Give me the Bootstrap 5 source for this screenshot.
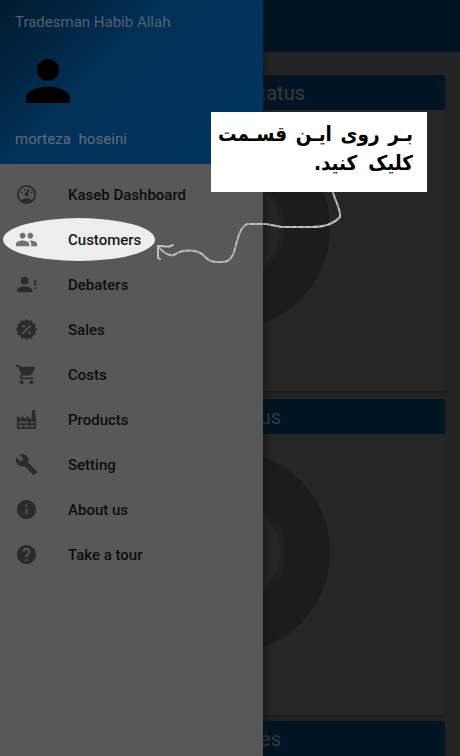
<!DOCTYPE html>
<html lang="en">
<head>
<meta charset="utf-8">
<meta name="viewport" content="width=device-width, initial-scale=1">
<title>Kaseb</title>
<link href="https://cdn.jsdelivr.net/npm/bootstrap@5.3.0/dist/css/bootstrap.min.css" rel="stylesheet">
<style>
body{font-family:Roboto,sans-serif;background:#232323;margin:0}
.app{width:460px;height:756px}
.appbar{height:52px;background:#001423}
.feed{padding:23px 15px 0 14px}
.stat{background:#262626;border:0;border-radius:3px;box-shadow:0 1px 2px #181818;height:316px;margin-bottom:8px;flex:none}
.stat:nth-child(2){margin-bottom:6px}
.stat-head{height:35px;background:#001423;color:#383a3c;font-size:20px;line-height:37px;border-radius:3px 3px 0 0;padding-right:140px}
.stat:nth-child(2) .stat-head,.stat:nth-child(3) .stat-head{padding-right:164px}
.ring{width:202px;height:202px;margin:17px 0 0 114px}
.drawer{width:263px;background:#585858;box-shadow:0 0 8px #111}
.profile{height:164px;background:linear-gradient(135deg,#001a2d 0%,#02325a 43%,#003460 100%);color:#53616d;padding:12px 15px 15px;font-size:15px;line-height:20px}
.profile .who{color:#656b70;white-space:pre;letter-spacing:.05px}
.avatar{width:66px;height:66px}
.entries{padding-top:8px}
.entry{height:45px;padding-left:15px;font-size:15px;font-weight:500;color:#0d0d0d;line-height:20px}
.entry svg{width:23px;height:23px;margin-right:30px;fill:#2b2b2b;flex:none;position:relative}
.entry span{position:relative}
.entry.spot{color:#181818}
.entry.spot svg{fill:#727272}
.entry.spot::before{content:"";position:absolute;left:3px;top:1px;width:152px;height:43px;border-radius:50%;background:#ededed}
.hint{left:211px;top:112px;width:216px;height:80px;background:#fff;color:#000;font:bold 20.5px/29px "DejaVu Sans Condensed","DejaVu Sans",sans-serif;font-stretch:condensed;padding:8px 14px 0 7px}
.hint .second{gap:11px}
.arrow{left:0;top:0;pointer-events:none}
</style>
<script src="https://cdn.jsdelivr.net/npm/bootstrap@5.3.0/dist/js/bootstrap.bundle.min.js"></script>
</head>
<body>
<div class="app position-relative overflow-hidden">
  <header class="appbar"></header>
  <main class="feed d-flex flex-column">
    <section class="card stat"><div class="stat-head text-end">Status</div>
      <svg class="ring" viewBox="0 0 202 202"><circle cx="101" cy="101" r="101" fill="#1c1c1c"/><circle cx="101" cy="101" r="56" fill="#202020"/><circle cx="101" cy="101" r="51" fill="#262626"/></svg>
    </section>
    <section class="card stat"><div class="stat-head text-end">Status</div>
      <svg class="ring" viewBox="0 0 202 202"><circle cx="101" cy="101" r="101" fill="#1c1c1c"/><circle cx="101" cy="101" r="56" fill="#202020"/><circle cx="101" cy="101" r="51" fill="#262626"/></svg>
    </section>
    <section class="card stat"><div class="stat-head text-end">Sales</div></section>
  </main>

  <aside class="drawer position-absolute top-0 start-0 h-100">
    <div class="profile d-flex flex-column justify-content-between">
      <div>Tradesman Habib Allah</div>
      <svg class="avatar" viewBox="0 0 24 24"><path d="M12 12c2.210 0 4-1.790 4-4s-1.790-4-4-4-4 1.790-4 4 1.790 4 4 4zm0 2c-2.670 0-8 1.340-8 4v2h16v-2c0-2.660-5.330-4-8-4z"/></svg>
      <div class="who">morteza  hoseini</div>
    </div>
    <nav class="entries d-flex flex-column">
      <div class="entry d-flex align-items-center"><svg viewBox="0 0 24 24"><path d="M12 2A10 10 0 0 0 2 12a10 10 0 0 0 10 10 10 10 0 0 0 10-10A10 10 0 0 0 12 2m0 2a8 8 0 0 1 8 8c0 2.400-1 4.500-2.700 6-1.400-1.300-3.300-2-5.300-2s-3.800.7-5.300 2C5 16.500 4 14.400 4 12a8 8 0 0 1 8-8m2 1.890c-.38.010-.74.260-.9.650l-1.290 3.230-.1.230c-.71.130-1.300.6-1.570 1.260-.41 1.030.090 2.190 1.120 2.600 1.030.410 2.190-.09 2.600-1.120.26-.66.140-1.420-.29-1.980l.1-.26 1.290-3.210.01-.03c.2-.51-.05-1.090-.56-1.300-.13-.05-.26-.07-.41-.07M10 6a1 1 0 0 0-1 1 1 1 0 0 0 1 1 1 1 0 0 0 1-1 1 1 0 0 0-1-1M7 9a1 1 0 0 0-1 1 1 1 0 0 0 1 1 1 1 0 0 0 1-1 1 1 0 0 0-1-1m10 0a1 1 0 0 0-1 1 1 1 0 0 0 1 1 1 1 0 0 0 1-1 1 1 0 0 0-1-1z"/></svg><span>Kaseb Dashboard</span></div>
      <div class="entry spot position-relative d-flex align-items-center"><svg viewBox="0 0 24 24"><path d="M16 11c1.660 0 2.990-1.340 2.990-3S17.660 5 16 5s-3 1.340-3 3 1.340 3 3 3zm-8 0c1.660 0 2.990-1.340 2.990-3S9.660 5 8 5 5 6.340 5 8s1.340 3 3 3zm0 2c-2.330 0-7 1.170-7 3.500V19h14v-2.500C15 14.170 10.330 13 8 13zm8 0c-.29 0-.62.020-.97.050 1.160.840 1.970 1.970 1.970 3.450V19h6v-2.500c0-2.330-4.670-3.500-7-3.500z"/></svg><span>Customers</span></div>
      <div class="entry d-flex align-items-center"><svg viewBox="0 0 24 24"><path d="M10 4a4 4 0 0 1 4 4 4 4 0 0 1-4 4 4 4 0 0 1-4-4 4 4 0 0 1 4-4m0 10c4.420 0 8 1.790 8 4v2H2v-2c0-2.210 3.580-4 8-4m10-2V7h2v6h-2v-1m0 5v-2h2v2h-2z"/></svg><span>Debaters</span></div>
      <div class="entry d-flex align-items-center"><svg viewBox="0 0 24 24"><path d="M12 1l2.410 2.020 3.090-.55 1.080 2.950 2.950 1.080-.55 3.090L23 12l-2.020 2.410.55 3.090-2.950 1.080-1.080 2.950-3.090-.55L12 23l-2.410-2.020-3.090.55-1.080-2.950-2.950-1.080.55-3.090L1 12l2.020-2.410-.55-3.090 2.950-1.080L6.500 2.470l3.090.55z"/><path d="M7.700 16.300l8.600-8.600" stroke="#585858" stroke-width="1.700"/><circle cx="9" cy="8.500" r="1.500" fill="#585858"/><circle cx="15" cy="15.500" r="1.500" fill="#585858"/></svg><span>Sales</span></div>
      <div class="entry d-flex align-items-center"><svg viewBox="0 0 24 24"><path d="M7 18c-1.100 0-1.990.9-1.990 2S5.900 22 7 22s2-.9 2-2-.9-2-2-2zM1 2v2h2l3.600 7.590-1.350 2.450c-.16.280-.25.610-.25.960 0 1.100.9 2 2 2h12v-2H7.420c-.14 0-.25-.11-.25-.25l.03-.12.9-1.630h7.450c.75 0 1.410-.41 1.750-1.030l3.580-6.490A1.003 1.003 0 0 0 20 4H5.210l-.94-2H1zm16 16c-1.100 0-1.990.9-1.990 2s.89 2 1.990 2 2-.9 2-2-.9-2-2-2z"/></svg><span>Costs</span></div>
      <div class="entry d-flex align-items-center"><svg viewBox="0 0 24 24"><path fill-rule="evenodd" d="M4 18v2h4v-2H4m0-4v2h10v-2H4m6 4v2h4v-2h-4m6-4v2h4v-2h-4m0 4v2h4v-2h-4M2 22V8l5 4V8l5 4V8l5 4 1-10h3l1 10v10H2z"/></svg><span>Products</span></div>
      <div class="entry d-flex align-items-center"><svg viewBox="0 0 24 24"><path d="M22.700 19l-9.100-9.100c.9-2.300.4-5-1.500-6.900-2-2-5-2.400-7.400-1.300L9 6 6 9 1.600 4.700C.4 7.100.9 10.100 2.900 12.100c1.900 1.900 4.600 2.400 6.900 1.500l9.100 9.100c.4.400 1 .4 1.400 0l2.300-2.300c.5-.4.500-1.100.1-1.400z"/></svg><span>Setting</span></div>
      <div class="entry d-flex align-items-center"><svg viewBox="0 0 24 24"><path d="M12 2C6.480 2 2 6.480 2 12s4.480 10 10 10 10-4.480 10-10S17.520 2 12 2zm1 15h-2v-6h2v6zm0-8h-2V7h2v2z"/></svg><span>About us</span></div>
      <div class="entry d-flex align-items-center"><svg viewBox="0 0 24 24"><path d="M12 2C6.480 2 2 6.480 2 12s4.480 10 10 10 10-4.480 10-10S17.520 2 12 2zm1 17h-2v-2h2v2zm2.070-7.750l-.9.920C13.450 12.900 13 13.500 13 15h-2v-.5c0-1.100.45-2.100 1.170-2.830l1.240-1.260c.37-.36.59-.86.59-1.410 0-1.100-.9-2-2-2s-2 .9-2 2H8c0-2.210 1.790-4 4-4s4 1.790 4 4c0 .88-.36 1.680-.93 2.250z"/></svg><span>Take a tour</span></div>
    </nav>
  </aside>

  <svg class="arrow position-absolute" width="460" height="756" fill="none" stroke="#c4c4c4" stroke-width="1.900" stroke-linecap="round" stroke-linejoin="round">
    <path d="M333 192C335 201 341 209 340 217C333 225 321 227 312 227H282C273 226 267 223 260 224H247C239 228 237 242 234 252C231 260 228 262 222 262C211 263 208 260 202 254C193 248 181 251 177 253C172 258 164 254 158 246M173 245L171 246C166 248 162 245 158 246L158 258L160 259"/>
    <path stroke="#777" stroke-width=".8" stroke-dasharray="2 5" d="M333 192C335 201 341 209 340 217C333 225 321 227 312 227H282C273 226 267 223 260 224H247C239 228 237 242 234 252C231 260 228 262 222 262C211 263 208 260 202 254C193 248 181 251 177 253C172 258 164 254 158 246"/>
  </svg>

  <div class="hint position-absolute" lang="fa" dir="rtl">
    <div class="d-flex justify-content-between"><span>بـر</span><span>روی</span><span>ایـن</span><span>قسـمت</span></div>
    <div class="second d-flex"><span>کلیک</span><span>کنید.</span></div>
  </div>
</div>
</body>
</html>
